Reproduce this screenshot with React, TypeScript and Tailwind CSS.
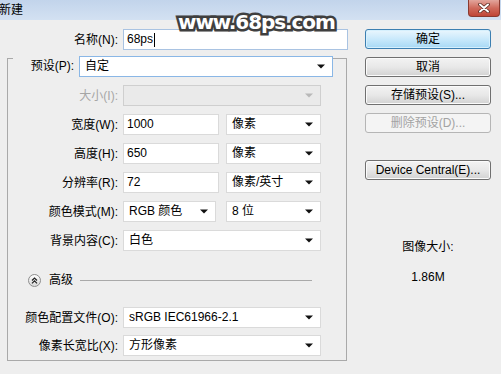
import React from "react";

function Arrow({ disabled }: { disabled?: boolean }) {
  return (
    <svg width="8" height="5" viewBox="0 0 8 5" className="shrink-0 mr-[7px]">
      <path d="M0 0.5 H8 L4 4.5 Z" fill={disabled ? "#b8b8b8" : "#111"} />
    </svg>
  );
}

function Select({ w, value, disabled, focus }: { w: string; value?: string; disabled?: boolean; focus?: boolean }) {
  return (
    <div
      className={
        "h-[21px] flex items-center justify-between border " +
        w +
        " " +
        (disabled
          ? "bg-[#eaeaea] border-[#cfcfcf]"
          : focus
          ? "bg-white border-[#8ab7e6]"
          : "bg-white border-[#dadada]")
      }
    >
      <span className="pl-[5px] leading-[19px] whitespace-nowrap">{value}</span>
      <Arrow disabled={disabled} />
    </div>
  );
}

function Input({ w, value }: { w: string; value: string }) {
  return (
    <div className={"h-[21px] flex items-center bg-white border border-[#dadada] " + w}>
      <span className="pl-[3px] leading-[19px]">{value}</span>
    </div>
  );
}

function Row({ label, children, disabled }: { label: string; children: React.ReactNode; disabled?: boolean }) {
  return (
    <div className="flex items-center h-[21px] mt-[8px]">
      <div className={"w-[110px] text-right whitespace-nowrap " + (disabled ? "text-[#a6a6a6]" : "")}>{label}</div>
      <div className="ml-[5px] flex items-center">{children}</div>
    </div>
  );
}

function Btn({ children, primary, disabled, className }: { children: React.ReactNode; primary?: boolean; disabled?: boolean; className?: string }) {
  const cls = primary
    ? "border-[#3c7fb1] bg-gradient-to-b from-[#eaf6fd] via-[#c9e9fb] to-[#a7d9f5] shadow-[inset_0_0_0_1px_#d6f0fd]"
    : disabled
    ? "border-[#b5b5b5] bg-[#f4f4f4] text-[#a3a3a3]"
    : "border-[#707070] bg-gradient-to-b from-[#f3f3f3] via-[#e8e8e8] to-[#d2d2d2] shadow-[inset_0_0_0_1px_#fbfbfb]";
  return (
    <div className={"h-[20px] w-[126px] rounded-[3px] border flex items-center justify-center leading-none " + cls + " " + (className || "")}>
      {children}
    </div>
  );
}

export default function App() {
  return (
    <div className="relative w-[501px] h-[374px] overflow-hidden bg-[#eeeeee] text-[12px] text-black font-['Liberation_Sans','Noto_Sans_CJK_SC',sans-serif]">
      {/* title bar */}
      <div className="h-[20px] flex items-start bg-gradient-to-b from-[#c2d4eb] to-[#d3e1f2]">
        <div className="ml-[-1px] mt-[2px] leading-[16px] text-[12px]">新建</div>
        <div className="ml-auto mr-[1px] w-[32px] h-[17px] rounded-b-[4px] border border-t-0 border-[#8a3a30] bg-gradient-to-b from-[#e2a59c] via-[#cf6a5c] to-[#c04536] flex items-center justify-center">
          <svg width="12" height="10" viewBox="0 0 12 10">
            <path d="M2 1.5 L10 8.5 M10 1.5 L2 8.5" stroke="#5a2a22" strokeWidth="3.6" strokeLinecap="round" />
            <path d="M2 1.5 L10 8.5 M10 1.5 L2 8.5" stroke="#fff" strokeWidth="2" strokeLinecap="round" />
          </svg>
        </div>
      </div>

      <div className="flex">
        {/* left */}
        <div className="w-[348px] flex flex-col">
          <div className="mt-[9px] flex items-center h-[21px]">
            <div className="w-[118px] text-right">名称(N):</div>
            <div className="ml-[5px] w-[225px] h-[21px] bg-white border border-[#a9c3e2] flex items-center">
              <span className="pl-[3px] leading-[19px]">68ps</span>
              <span className="ml-[1px] w-[1px] h-[14px] bg-black" />
            </div>
          </div>

          <div className="mt-[8px] ml-[7px] w-[340px] border border-[#a9a9a9] pb-[4px] flex flex-col">
            <div className="-mt-[3px] flex items-center h-[21px]">
              <div className="ml-[5px] w-[66px] h-[21px] bg-[#eeeeee] text-right pr-[5px] leading-[21px] whitespace-nowrap">预设(P):</div>
              <Select w="w-[254px]" value="自定" focus />
            </div>
            <Row label="大小(I):" disabled>
              <Select w="w-[198px]" disabled />
            </Row>
            <Row label="宽度(W):">
              <Input w="w-[96px]" value="1000" />
              <div className="ml-[7px]"><Select w="w-[95px]" value="像素" /></div>
            </Row>
            <Row label="高度(H):">
              <Input w="w-[96px]" value="650" />
              <div className="ml-[7px]"><Select w="w-[95px]" value="像素" /></div>
            </Row>
            <Row label="分辨率(R):">
              <Input w="w-[96px]" value="72" />
              <div className="ml-[7px]"><Select w="w-[95px]" value="像素/英寸" /></div>
            </Row>
            <Row label="颜色模式(M):">
              <Select w="w-[93px]" value="RGB 颜色" />
              <div className="ml-[10px]"><Select w="w-[95px]" value="8 位" /></div>
            </Row>
            <Row label="背景内容(C):">
              <Select w="w-[198px]" value="白色" />
            </Row>

            <div className="mt-[22px] h-[14px] flex items-center">
              <div className="ml-[20px] w-[13px] h-[13px] rounded-full border border-[#8d8d8d] bg-gradient-to-b from-[#ffffff] to-[#d9d9d9] flex items-center justify-center">
                <svg width="7" height="7" viewBox="0 0 7 7">
                  <path d="M1 3.5 L3.5 1 L6 3.5 M1 6.3 L3.5 3.8 L6 6.3" stroke="#222" strokeWidth="1.2" fill="none" />
                </svg>
              </div>
              <div className="ml-[8px] leading-[14px]">高级</div>
              <div className="ml-[7px] w-[232px] h-[1px] bg-[#a9a9a9]" />
            </div>

            <div className="flex items-center h-[21px] mt-[20px]">
              <div className="w-[110px] text-right whitespace-nowrap">颜色配置文件(O):</div>
              <div className="ml-[5px]"><Select w="w-[198px]" value="sRGB IEC61966-2.1" /></div>
            </div>
            <div className="flex items-center h-[21px] mt-[7px]">
              <div className="w-[110px] text-right whitespace-nowrap">像素长宽比(X):</div>
              <div className="ml-[5px]"><Select w="w-[198px]" value="方形像素" /></div>
            </div>
          </div>
        </div>

        {/* right */}
        <div className="ml-[17px] w-[126px] flex flex-col pt-[9px]">
          <Btn primary>确定</Btn>
          <Btn className="mt-[8px]">取消</Btn>
          <Btn className="mt-[8px]">存储预设(S)...</Btn>
          <Btn className="mt-[8px]" disabled>删除预设(D)...</Btn>
          <Btn className="mt-[27px]">Device Central(E)...</Btn>
          <div className="mt-[59px] text-center leading-[16px]">图像大小:</div>
          <div className="mt-[14px] text-center leading-[16px]">1.86M</div>
        </div>
      </div>

      {/* watermark overlay */}
      <div className="absolute left-[178px] top-[10px] text-[20px] font-bold tracking-[-1.1px] leading-[24px] text-white font-['DejaVu_Sans',sans-serif] [-webkit-text-stroke:5px_#3f3f3f] [paint-order:stroke_fill]">
        www.68ps.com
      </div>
    </div>
  );
}
